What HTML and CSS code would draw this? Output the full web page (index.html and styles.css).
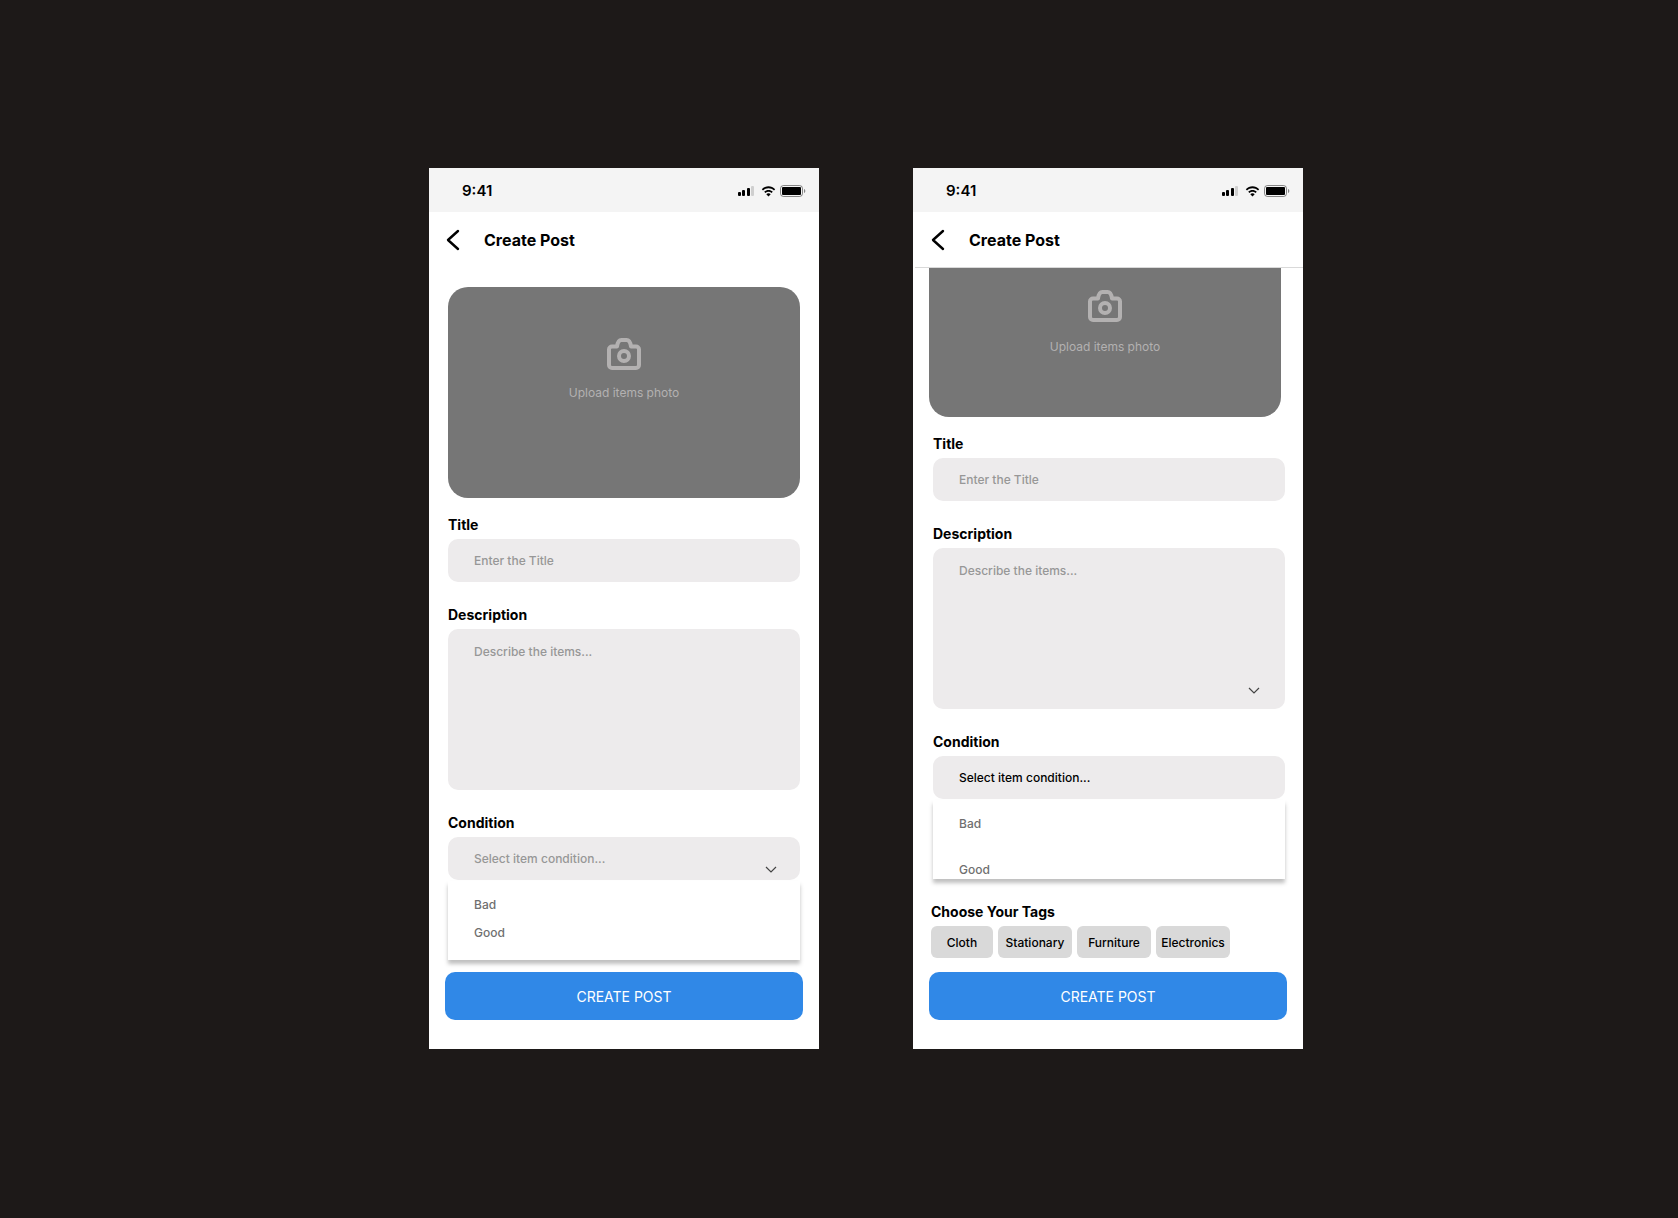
FILE: index.html
```html
<!DOCTYPE html>
<html lang="en">
<head>
<meta charset="utf-8">
<meta name="viewport" content="width=device-width, initial-scale=1">
<title>Create Post</title>
<link rel="stylesheet" href="styles.css">
</head>
<body>
<svg class="sprite" aria-hidden="true">
  <symbol id="signal" viewBox="0 0 17 11">
    <rect x="0" y="6" width="3" height="4" rx="1"/>
    <rect x="4" y="4" width="3" height="6" rx="1"/>
    <rect x="9" y="2" width="3" height="8" rx="1"/>
    <rect x="13" y="0" width="3" height="10" rx="1" opacity=".15"/>
  </symbol>
  <symbol id="wifi" viewBox="0 0 15 11">
    <path d="M7.5 2.2c2 0 4 .8 5.500 2.200l1.200-1.200C12.400 1.300 10 .3 7.500.3S2.600 1.300.8 3.200L2 4.400C3.500 3 5.500 2.200 7.500 2.200z"/>
    <path d="M7.500 5.800c1.100 0 2.200.4 3 1.100l1.300-1.200C10.600 4.600 9.100 4 7.500 4s-3.100.6-4.300 1.700l1.300 1.200c.8-.7 1.900-1.100 3-1.100z"/>
    <path d="M9.700 8.200c-.6-.6-1.400-.9-2.200-.9s-1.600.3-2.200.9l2.200 2.300z"/>
  </symbol>
  <symbol id="battery" viewBox="0 0 26 12">
    <rect x=".5" y=".5" width="22" height="11" rx="3" fill="none" stroke="#000" stroke-opacity=".45"/>
    <rect x="2" y="2" width="19" height="8" rx="1"/>
    <path d="M24 4v4c.8-.3 1.300-1.100 1.300-2S24.800 4.300 24 4z" opacity=".45"/>
  </symbol>
  <symbol id="back" viewBox="0 0 14 22">
    <path d="M12 2 2 11l10 9" fill="none" stroke="#000" stroke-width="2.400" stroke-linecap="round" stroke-linejoin="round"/>
  </symbol>
  <symbol id="camera" viewBox="0 0 34 32">
    <path d="M5 8.500h5c.5-3.500 1.500-6.500 4.500-6.500h5c3 0 4 3 4.500 6.500h5a3 3 0 0 1 3 3V27a3 3 0 0 1-3 3H5a3 3 0 0 1-3-3V11.500a3 3 0 0 1 3-3z" fill="none" stroke="currentColor" stroke-width="4" stroke-linejoin="round"/>
    <circle cx="17" cy="18" r="5" fill="none" stroke="currentColor" stroke-width="4"/>
  </symbol>
  <symbol id="chevron" viewBox="0 0 12 8">
    <path d="M1 1l5 5 5-5" fill="none" stroke="#444" stroke-width="1.200"/>
  </symbol>
</svg>

<main class="board">
  <section class="phone" aria-label="Create post">
    <div class="status">
      <span class="status-time">9:41</span>
      <svg class="signal"><use href="#signal"/></svg>
      <svg class="wifi"><use href="#wifi"/></svg>
      <svg class="battery"><use href="#battery"/></svg>
    </div>
    <header class="topbar">
      <button class="back" type="button" aria-label="Back"><svg><use href="#back"/></svg></button>
      <h1>Create Post</h1>
    </header>
    <form class="form">
      <button class="photo" type="button">
        <svg><use href="#camera"/></svg>
        <span>Upload items photo</span>
      </button>
      <div class="fields">
        <div class="field">
          <label for="title-a">Title</label>
          <input id="title-a" class="control" type="text" placeholder="Enter the Title">
        </div>
        <div class="field">
          <label for="description-a">Description</label>
          <textarea id="description-a" class="control" placeholder="Describe the items..."></textarea>
        </div>
        <div class="field">
          <label for="condition-a">Condition</label>
          <div class="control-wrap">
            <select id="condition-a" class="control muted"><option>Select item condition...</option></select>
            <svg class="chevron chevron-select"><use href="#chevron"/></svg>
          </div>
          <ul class="options" role="listbox" aria-label="Condition">
            <li role="option">Bad</li>
            <li role="option">Good</li>
          </ul>
        </div>
      </div>
      <button class="submit" type="submit">CREATE POST</button>
    </form>
  </section>

  <section class="phone phone-scrolled" aria-label="Create post, scrolled">
    <div class="status">
      <span class="status-time">9:41</span>
      <svg class="signal"><use href="#signal"/></svg>
      <svg class="wifi"><use href="#wifi"/></svg>
      <svg class="battery"><use href="#battery"/></svg>
    </div>
    <header class="topbar">
      <button class="back" type="button" aria-label="Back"><svg><use href="#back"/></svg></button>
      <h1>Create Post</h1>
    </header>
    <form class="form">
      <button class="photo" type="button">
        <svg><use href="#camera"/></svg>
        <span>Upload items photo</span>
      </button>
      <div class="fields">
        <div class="field">
          <label for="title-b">Title</label>
          <input id="title-b" class="control" type="text" placeholder="Enter the Title">
        </div>
        <div class="field">
          <label for="description-b">Description</label>
          <div class="control-wrap">
            <textarea id="description-b" class="control" placeholder="Describe the items..."></textarea>
            <svg class="chevron chevron-area"><use href="#chevron"/></svg>
          </div>
        </div>
        <div class="field">
          <label for="condition-b">Condition</label>
          <select id="condition-b" class="control"><option>Select item condition...</option></select>
          <ul class="options" role="listbox" aria-label="Condition">
            <li role="option">Bad</li>
            <li role="option">Good</li>
          </ul>
        </div>
      </div>
      <section class="tags">
        <h2>Choose Your Tags</h2>
        <div class="tag-row">
          <button class="tag tag-small" type="button">Cloth</button>
          <button class="tag" type="button">Stationary</button>
          <button class="tag" type="button">Furniture</button>
          <button class="tag" type="button">Electronics</button>
        </div>
      </section>
      <button class="submit" type="submit">CREATE POST</button>
    </form>
  </section>
</main>
</body>
</html>
```
FILE: styles.css
```css
* {
  box-sizing: border-box;
}

body {
  margin: 0;
  min-height: 100vh;
  background: #1d1918;
  color: #000;
  font: 12px/16px Inter, "Liberation Sans", sans-serif;
}

button,
input,
select,
textarea {
  margin: 0;
  border: 0;
  font: inherit;
  color: inherit;
}

h1,
h2,
ul {
  margin: 0;
  padding: 0;
}

svg {
  display: block;
}

.sprite {
  position: absolute;
  width: 0;
  height: 0;
}

.board {
  display: flex;
  flex-wrap: wrap;
  align-items: flex-start;
  justify-content: center;
  gap: 94px;
  padding: 168px 0 168px 54px;
}

.phone {
  flex: 0 1 390px;
  background: #fff;
}

/* Status bar */
.status {
  display: flex;
  align-items: center;
  height: 44px;
  padding: 2px 13px 0 33px;
  background: #f4f4f4;
}

.status-time {
  flex: 1;
  font-size: 15px;
  font-weight: 600;
}

.signal {
  width: 17px;
  height: 11px;
}

.wifi {
  width: 15px;
  height: 11px;
  margin: 0 4px 0 6px;
}

.battery {
  width: 26px;
  height: 12px;
}

/* Title bar */
.topbar {
  display: flex;
  align-items: center;
  gap: 24px;
  height: 56px;
  padding: 0 17px;
}

.phone-scrolled .topbar {
  margin-left: 2px;
  padding: 0 16px;
  border-bottom: 1px solid #d9d9d9;
}

.back {
  padding: 0;
  background: none;
}

.back svg {
  width: 14px;
  height: 22px;
}

h1 {
  font-size: 16px;
  font-weight: 700;
  line-height: 20px;
}

/* Form */
.form {
  display: flex;
  flex-direction: column;
  padding: 19px 0 29px;
}

.photo {
  display: flex;
  flex-direction: column;
  align-items: center;
  gap: 15px;
  height: 211px;
  margin: 0 19px 19px;
  padding: 51px 0 0;
  border-radius: 20px;
  background: #767676;
  color: #b3b1b1;
}

.photo svg {
  width: 34px;
  height: 32px;
}

.phone-scrolled .form {
  padding-top: 0;
}

.phone-scrolled .photo {
  gap: 17px;
  height: 149px;
  margin: 0 22px 19px 16px;
  padding-top: 22px;
  border-radius: 0 0 20px 20px;
}

.fields {
  display: flex;
  flex-direction: column;
  gap: 25px;
  margin: 0 19px;
}

.phone-scrolled .fields {
  margin: 0 18px 0 20px;
}

label,
h2 {
  display: block;
  margin-bottom: 6px;
  font-size: 14px;
  font-weight: 700;
  line-height: 16px;
}

.control-wrap {
  position: relative;
}

.control {
  display: block;
  width: 100%;
  height: 43px;
  padding: 0 26px;
  border-radius: 10px;
  background: #edebec;
  font-weight: 500;
  appearance: none;
}

textarea.control {
  height: 161px;
  padding: 15px 26px;
  resize: none;
}

.control::placeholder {
  color: #979797;
  opacity: 1;
}

.muted {
  color: #979797;
}

.chevron {
  position: absolute;
  width: 12px;
  height: 8px;
  pointer-events: none;
}

.chevron-select {
  right: 23px;
  bottom: 6px;
}

.chevron-area {
  right: 25px;
  bottom: 14px;
}

.options {
  display: flex;
  flex-direction: column;
  gap: 12px;
  height: 79px;
  margin-top: 1px;
  padding: 16px 26px 0;
  list-style: none;
  background: #fff;
  box-shadow: 0 4px 4px rgba(0, 0, 0, 0.25);
  color: #6f6f6f;
  font-weight: 500;
}

.phone-scrolled .options {
  gap: 30px;
}

/* Tags */
.tags {
  margin: 25px 18px 0;
}

.tag-row {
  display: flex;
  flex-wrap: wrap;
  gap: 5px;
  margin-bottom: 2px;
}

.tag {
  width: 74px;
  height: 32px;
  padding: 2px 0 0;
  border-radius: 6px;
  background: #d9d9d9;
  font-weight: 500;
}

.tag-small {
  width: 62px;
}

.submit {
  height: 48px;
  margin: 12px 16px 0;
  padding: 2px 0 0;
  border-radius: 10px;
  background: #3088e7;
  color: #fff;
  font-size: 14px;
}
```
